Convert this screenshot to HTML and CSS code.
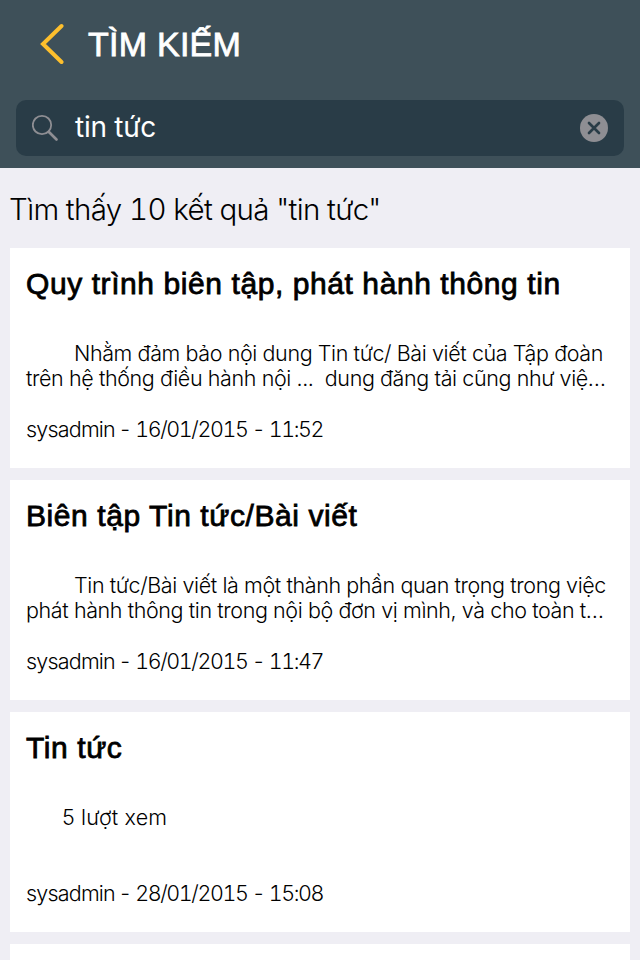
FILE: index.html
```
<!DOCTYPE html>
<html lang="vi">
<head>
<meta charset="utf-8">
<title>Tìm kiếm</title>
<link rel="stylesheet" href="styles.css">
</head>
<body>
<header class="header">
  <div class="nav">
    <svg class="back" width="26" height="42" viewBox="0 0 26 42" fill="none" stroke="#fdbf2d" stroke-width="4" stroke-linecap="round" stroke-linejoin="miter"><path d="M23.5 3 5 21 23.5 39"/></svg>
    <h1 class="nav-title">TÌM KIẾM</h1>
  </div>
  <div class="search">
    <svg class="glass" width="28" height="28" viewBox="0 0 28 28" fill="none" stroke="#8e8e93"><circle cx="10" cy="11" r="9.2" stroke-width="1.8"/><path d="M16.7 17.7 24.5 25.5" stroke-width="2.7" stroke-linecap="round"/></svg>
    <div class="query">tin tức</div>
    <svg class="clear" width="28" height="28" viewBox="0 0 28 28"><circle cx="14" cy="14" r="14" fill="#8e8e93"/><path d="M9 9 19 19M19 9 9 19" stroke="#293c47" stroke-width="2.7" stroke-linecap="round"/></svg>
  </div>
</header>
<main class="results">
  <p class="summary">Tìm thấy 10 kết quả "tin tức"</p>
  <article class="card">
    <h2 class="card-title">Quy trình biên tập, phát hành thông tin</h2>
    <p class="excerpt"><span class="line first">Nhằm đảm bảo nội dung Tin tức/ Bài viết của Tập đoàn</span><span class="line">trên hệ thống điều hành nội ...&nbsp; dung đăng tải cũng như việ…</span></p>
    <p class="meta"><span class="author">sysadmin</span> - 16/01/2015 - 11:52</p>
  </article>
  <article class="card">
    <h2 class="card-title">Biên tập Tin tức/Bài viết</h2>
    <p class="excerpt"><span class="line first">Tin tức/Bài viết là một thành phần quan trọng trong việc</span><span class="line">phát hành thông tin trong nội bộ đơn vị mình, và cho toàn t…</span></p>
    <p class="meta"><span class="author">sysadmin</span> - 16/01/2015 - 11:47</p>
  </article>
  <article class="card">
    <h2 class="card-title">Tin tức</h2>
    <p class="excerpt"><span class="line views">5 lượt xem</span></p>
    <p class="meta"><span class="author">sysadmin</span> - 28/01/2015 - 15:08</p>
  </article>
  <article class="card card-peek"></article>
</main>
</body>
</html>
```
FILE: styles.css
```
* { box-sizing: border-box; }
body, h1, h2, p { margin: 0; }
body {
  background: #efeef4;
  color: #000;
  font-family: Inter, "Liberation Sans", sans-serif;
  font-weight: 300;
}
.header { height: 168px; padding: 0 16px; background: #3e5059; color: #fff; }
.nav { display: flex; align-items: center; height: 100px; padding: 0 0 12px 22px; }
.back { flex: none; }
.nav-title {
  margin-left: 24px;
  font: 500 34px/40px "Liberation Sans", sans-serif;
  letter-spacing: .25px;
  -webkit-text-stroke: .8px #fff;
  white-space: nowrap;
}
.search {
  display: flex;
  align-items: center;
  height: 56px;
  padding: 0 16px;
  border-radius: 10px;
  background: #293c47;
}
.glass { flex: none; }
.query { flex: 1; margin-left: 15px; padding-bottom: 2px; font-size: 28px; line-height: 36px; font-weight: 400; letter-spacing: -.25px; }
.clear { flex: none; }
.results { display: flex; flex-direction: column; gap: 12px; padding: 0 10px; }
.summary {
  height: 68px;
  margin-left: -1px;
  padding-top: 22px;
  font-size: 29.5px;
  line-height: 38px;
  font-weight: 280;
  font-feature-settings: "tnum";
  letter-spacing: -.62px;
  white-space: nowrap;
}
.card { flex: none; height: 220px; padding: 18px 16px; background: #fff; }
.card-peek { height: 16px; padding: 0; }
.card-title {
  font: 500 30px/36px "Liberation Sans", sans-serif;
  letter-spacing: .58px;
  -webkit-text-stroke: .8px #000;
  white-space: nowrap;
}
.excerpt { height: 50px; margin-top: 39px; font-size: 21.5px; line-height: 25px; letter-spacing: -.4px; white-space: nowrap; }
.line { display: block; }
.first { padding-left: 48px; }
.views { padding-left: 36px; letter-spacing: .15px; }
.meta {
  margin-top: 26px;
  font-size: 21.5px;
  line-height: 25px;
  font-feature-settings: "tnum";
  letter-spacing: -1.4px;
  white-space: nowrap;
}
.author { margin-right: -1px; letter-spacing: -.8px; }
```
